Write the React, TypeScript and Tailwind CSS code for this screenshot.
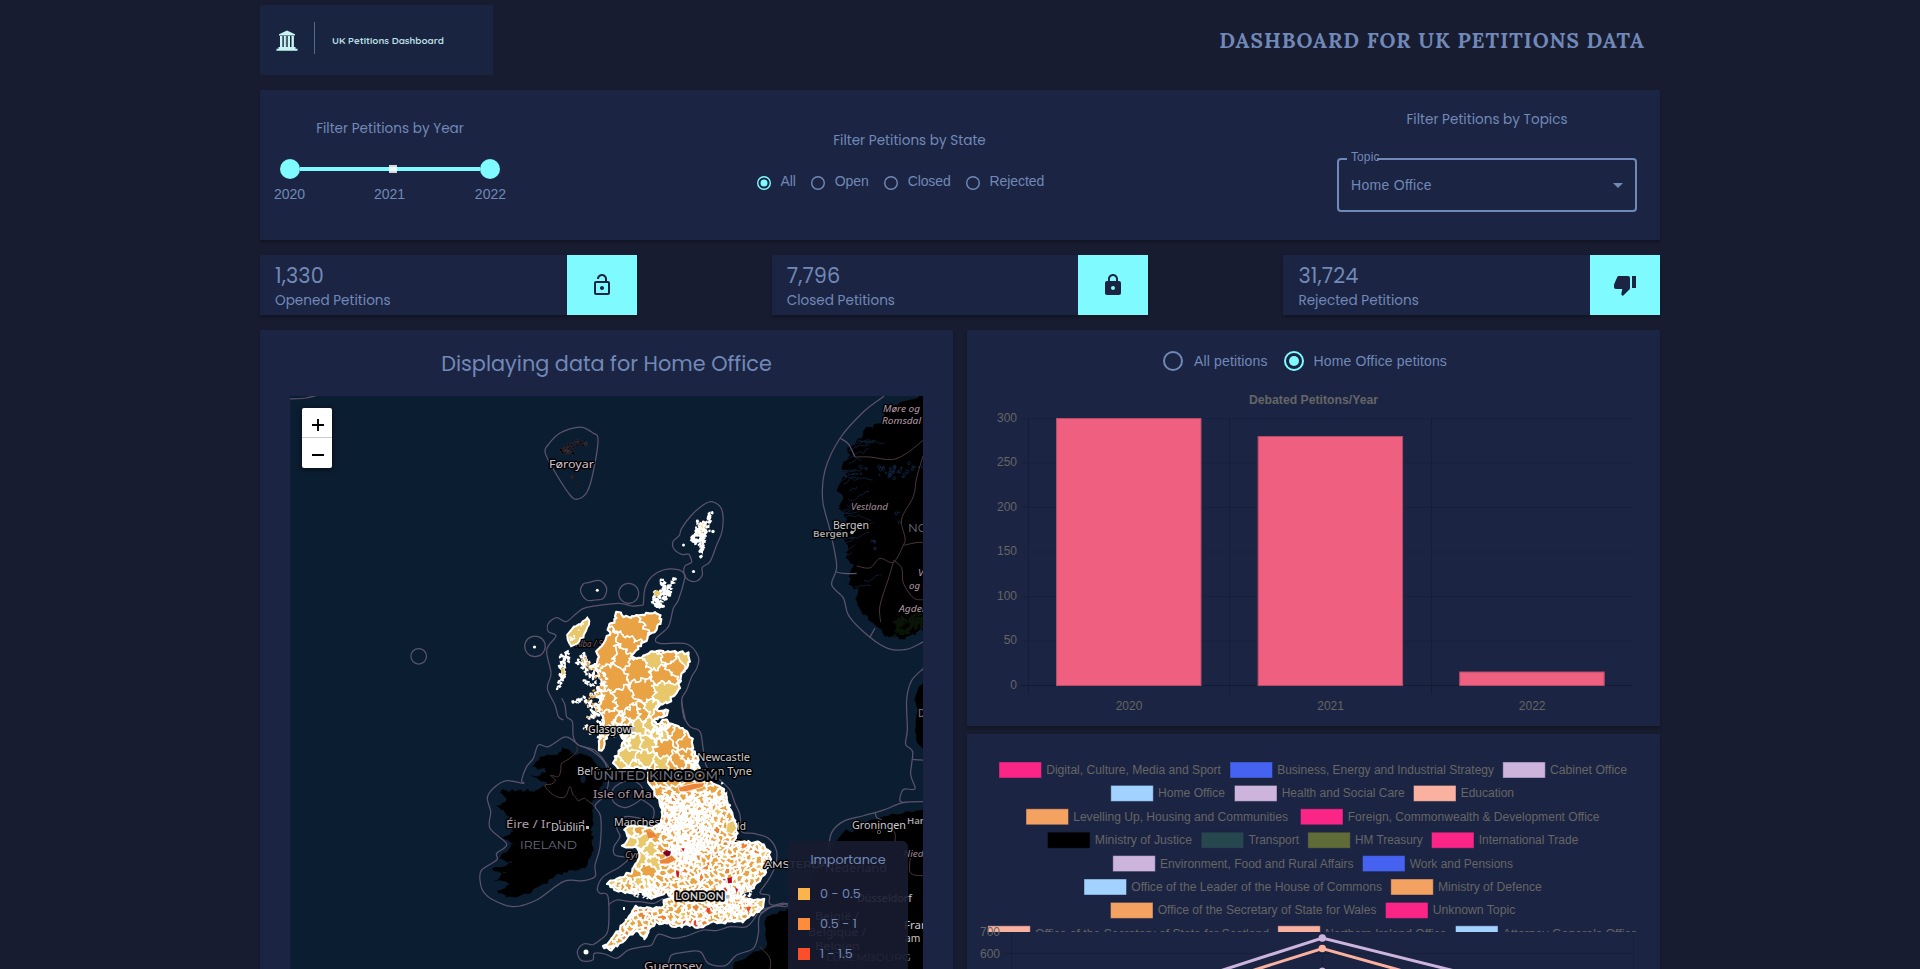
import React from "react";
import { MdOutlineLockOpen, MdLock, MdThumbDown } from "react-icons/md";

type Pt = [number, number];

const POPPINS = "font-['Poppins','Inter',sans-serif]";
const HELV = "font-['Liberation_Sans',Arial,sans-serif]";

/* ---------- geometry helpers ---------- */
function rng(seed: number) {
  let s = seed;
  return () => {
    s = (s * 1664525 + 1013904223) % 4294967296;
    return s / 4294967296;
  };
}
function parse(text: string, ox = 0, oy = 0, sx = 1, sy = 1): Pt[] {
  return text
    .trim()
    .split(/\s+/)
    .map((p) => {
      const [x, y] = p.split(",").map(Number);
      return [ox + x / sx, oy + y / sy] as Pt;
    });
}
const toPath = (pts: Pt[], close = true) =>
  "M" + pts.map((p) => p[0].toFixed(1) + " " + p[1].toFixed(1)).join("L") + (close ? "Z" : "");

function smooth(pts: Pt[], close = false) {
  const n = pts.length;
  const at = (i: number) => (close ? pts[(i + n) % n] : pts[Math.max(0, Math.min(n - 1, i))]);
  let d = `M${pts[0][0]} ${pts[0][1]}`;
  const m = close ? n : n - 1;
  for (let i = 0; i < m; i++) {
    const a = at(i - 1), b = at(i), c = at(i + 1), e = at(i + 2);
    d += `C${b[0] + (c[0] - a[0]) / 6} ${b[1] + (c[1] - a[1]) / 6} ${c[0] - (e[0] - b[0]) / 6} ${c[1] - (e[1] - b[1]) / 6} ${c[0]} ${c[1]}`;
  }
  return d;
}
function rough(pts: Pt[], seed: number, amp: number, step: number): Pt[] {
  const r = rng(seed);
  const out: Pt[] = [];
  pts.forEach((a, i) => {
    const b = pts[(i + 1) % pts.length];
    const len = Math.hypot(b[0] - a[0], b[1] - a[1]);
    const k = Math.max(1, Math.round(len / step));
    for (let j = 0; j < k; j++) {
      const t = j / k;
      out.push([
        a[0] + (b[0] - a[0]) * t + (r() - 0.5) * 2 * amp,
        a[1] + (b[1] - a[1]) * t + (r() - 0.5) * 2 * amp,
      ]);
    }
  });
  return out;
}
/* shared displacement field, so that borders of neighbouring cells stay joined */
function warp([x, y]: Pt): Pt {
  return [
    x + 1.5 * Math.sin(y * 0.71 + x * 0.23) + 1.1 * Math.sin(y * 1.63 - x * 0.9) + 0.5 * Math.sin(x * 2.3 + y * 1.1),
    y + 1.5 * Math.sin(x * 0.67 - y * 0.31) + 1.1 * Math.sin(x * 1.49 + y * 0.8) + 0.5 * Math.sin(y * 2.5 - x * 1.3),
  ];
}
function warpPoly(pts: Pt[]): Pt[] {
  const out: Pt[] = [];
  pts.forEach((a, i) => {
    const b = pts[(i + 1) % pts.length];
    const k = Math.max(1, Math.round(Math.hypot(b[0] - a[0], b[1] - a[1]) / 1.5));
    for (let j = 0; j < k; j++) out.push(warp([a[0] + ((b[0] - a[0]) * j) / k, a[1] + ((b[1] - a[1]) * j) / k]));
  });
  return out;
}
function inside(p: Pt, poly: Pt[]) {
  let c = false;
  for (let i = 0, j = poly.length - 1; i < poly.length; j = i++) {
    const [xi, yi] = poly[i], [xj, yj] = poly[j];
    if (yi > p[1] !== yj > p[1] && p[0] < ((xj - xi) * (p[1] - yi)) / (yj - yi) + xi) c = !c;
  }
  return c;
}
function clipHalf(poly: Pt[], a: Pt, b: Pt): Pt[] {
  const mx = (a[0] + b[0]) / 2, my = (a[1] + b[1]) / 2, dx = b[0] - a[0], dy = b[1] - a[1];
  const f = (p: Pt) => (p[0] - mx) * dx + (p[1] - my) * dy;
  const out: Pt[] = [];
  for (let i = 0; i < poly.length; i++) {
    const p = poly[i], q = poly[(i + 1) % poly.length];
    const fp = f(p), fq = f(q);
    if (fp <= 0) out.push(p);
    if (fp < 0 !== fq < 0) {
      const t = fp / (fp - fq);
      out.push([p[0] + (q[0] - p[0]) * t, p[1] + (q[1] - p[1]) * t]);
    }
  }
  return out;
}

/* ---------- Great Britain ---------- */
const GB = parse(`617,613 627,617 640,615 657,612 661,615 660,623 652,633 640,645 636,651 630,657 637,660 650,652 667,652 688,653
690,662 685,670 680,682 677,693 668,702 660,705 657,710 669,711 664,716 653,721 657,724 664,720 670,722 683,728 692,738 693,750 698,760 700,772 713,782 722,788 727,800
732,813 737,827 737,835 733,843 742,842 760,842 770,853 770,863 763,877 753,887 743,893 738,897 747,898 763,900 762,908 753,915
740,922 727,922 713,922 700,927 687,925 675,928 667,922 655,923 648,930 645,940 637,930 628,937 617,945 612,950 602,947 612,938
622,927 628,918 635,907 650,908 662,907 665,900 673,895 665,893 653,899 640,893 627,892 615,890 608,883 620,878 630,873 637,863
640,853 637,847 623,847 628,838 625,827 635,825 650,828 660,825 662,813 657,797 652,788 648,780 650,768 640,768 630,768 618,770
613,763 618,752 625,742 620,735 617,727 610,730 606,738 601,751 599,749 601,737 605,723 601,713 597,707 602,700 595,697 602,683 598,673
590,667 598,663 597,650 605,642 610,633 608,627 615,620`);
const CENTRES: [number, number, number][] = [
  [672, 818, 20], [692, 812, 16], [684, 850, 15], [733, 898, 17], [706, 838, 10], [652, 891, 8], [697, 764, 6], [620, 733, 9], [660, 728, 7], [715, 800, 7], [668, 893, 6],
];
const SCOT_SEEDS = parse(`637,630 650,622 608,652 622,655 630,648 612,678 640,668 655,660 668,656 685,657 676,666 664,676 645,692 664,690
648,710 625,702 606,705 608,718 632,714 645,712 625,724 648,742 628,756 664,746 676,734 688,742 680,764 690,757 668,730`);
function gap(x: number, y: number) {
  for (const [cx, cy, r] of CENTRES) if (Math.hypot(x - cx, y - cy) < r) return 3;
  if (y < 728) return 13;
  if (y < 768) return 17;
  if (x < 662 && y > 825 && y < 885) return 12;
  if (y > 800) return 5.6;
  return 11;
}
function buildCells() {
  const r = rng(77);
  const seeds: Pt[] = [...SCOT_SEEDS];
  for (let i = 0; i < 14000; i++) {
    const p: Pt = [598 + r() * 176, 715 + r() * 240];
    if (!inside(p, GB)) continue;
    const g = gap(p[0], p[1]) * (0.68 + r() * 0.7);
    if (seeds.every((q) => Math.hypot(p[0] - q[0], p[1] - q[1]) > g)) seeds.push(p);
  }
  return seeds.map((s, i) => {
    let poly: Pt[] = [[s[0] - 34, s[1] - 34], [s[0] + 34, s[1] - 34], [s[0] + 34, s[1] + 34], [s[0] - 34, s[1] + 34]];
    seeds.forEach((q, j) => {
      if (i !== j && Math.abs(q[0] - s[0]) < 68 && Math.abs(q[1] - s[1]) < 68) poly = clipHalf(poly, s, q);
    });
    const [x, y] = s;
    const v = r();
    let fill = "#eaa344";
    if ((y > 725 && y < 768 && x < 665) || (x < 660 && y > 838 && y < 886)) fill = v < 0.75 ? "#e8c86b" : "#eaa344";
    else if (y < 728) fill = (x === 655 && y === 660) || (x === 664 && y === 690) || x === 685 || (x === 648 && y === 710) ? "#e8c86b" : "#eaa344";
    else if (y > 795) {
      if (v < 0.08) fill = "#e8c86b";
      else if (v < 0.24) fill = "#ec8438";
      else if (v < 0.25) fill = "#e3422b";
    }
    return { d: toPath(warpPoly(poly)), fill, w: gap(x, y) < 4 ? 2.1 : y > 790 ? 1.8 : 1.5 };
  });
}
const CELLS = buildCells();
const GB_D = toPath(rough(GB, 9, 1.5, 2.6));

/* small islands, drawn as clusters of short blots */
function blots(poly: Pt[], n: number, seed: number, size: number) {
  const r = rng(seed);
  const xs = poly.map((p) => p[0]), ys = poly.map((p) => p[1]);
  const x0 = Math.min(...xs), x1 = Math.max(...xs), y0 = Math.min(...ys), y1 = Math.max(...ys);
  let d = "";
  let k = 0;
  for (let i = 0; i < 4000 && k < n; i++) {
    const p: Pt = [x0 + r() * (x1 - x0), y0 + r() * (y1 - y0)];
    if (!inside(p, poly)) continue;
    k++;
    const pts: Pt[] = [];
    for (let a = 0; a < 6; a++) {
      const q = size * (0.4 + r());
      pts.push([p[0] + Math.cos(a * 1.047) * q, p[1] + Math.sin(a * 1.047) * q]);
    }
    d += toPath(pts);
  }
  return d;
}
const z6 = (t: string) => parse(t, 540, 480, 3, 3);
const z7 = (t: string) => parse(t, 540, 700, 3, 3);
const z5 = (t: string) => parse(t, 280, 500, 3, 3);
const z8 = (t: string) => parse(t, 760, 380, 3, 2.662);

const LEWIS = z6("143,412 150,425 138,452 128,470 112,488 95,500 86,488 83,462 100,440 122,432");
const SHETLAND = z6("507,92 517,95 517,128 504,130 510,155 498,150 498,172 493,200 485,230 477,228 482,195 468,190 452,182 452,165 466,160 468,125 485,120 495,130 505,118");
const ORKNEY = z6("360,298 372,300 380,315 408,292 402,308 388,322 400,330 388,345 376,360 372,385 362,388 340,375 334,345 345,330 365,328");
const WEST_COAST = z6("150,560 185,545 200,600 195,650 185,700 165,715 140,718 150,690 130,670 150,650 165,620");
const PENNINES = z7("365,300 440,330 560,345 540,375 450,400 365,370");
const WHITE_BLOTS = [
  blots(z6("80,460 145,415 150,430 120,490 95,510 85,500"), 26, 3, 1.8),
  blots(z6("60,520 82,512 87,540 76,570 76,590 68,600 62,592 58,560"), 46, 4, 1.8),
  blots(z6("60,596 70,598 58,628 48,632"), 12, 44, 1.4),
  blots(z6("105,545 130,515 150,545 170,578 150,592 130,570"), 44, 5, 1.9),
  blots(WEST_COAST, 74, 6, 2.1),
  blots(z6("120,595 150,605 165,615 150,620"), 12, 7, 1.5),
  blots(z6("95,668 125,645 135,652 105,675"), 12, 8, 1.6),
  blots(SHETLAND, 110, 9, 1.9),
  blots(ORKNEY, 95, 10, 1.9),
  blots(z7("120,80 190,60 200,120 150,110"), 34, 11, 1.8),
  blots(z7("175,90 200,60 280,85 270,100 215,130"), 18, 12, 1.4),
  blots(PENNINES, 120, 13, 1.9),
  blots(z7("410,440 450,440 465,480 430,500"), 34, 14, 1.8),
  blots(z7("550,575 640,560 625,640 580,650"), 60, 15, 1.7),
  blots(z7("270,570 360,570 345,598 290,592"), 22, 16, 1.5),
  blots(z7("540,240 570,270 560,300 545,290"), 10, 17, 1.3),
];
const ORANGE_BLOTS = [
  blots(PENNINES, 26, 23, 1.2),
  blots(WEST_COAST, 30, 26, 1.3),
  blots(z6("125,545 135,525 150,560 150,580"), 12, 27, 1.2),
  blots(z7("550,575 640,560 625,640 580,650"), 16, 25, 1),
];

const IRELAND = rough(
  z5(`850,745 875,752 870,762 900,762 935,770 950,800 970,830 970,850 950,885 935,905 940,940 935,980 940,1040 930,1070 920,1105 870,1115 830,1125
800,1150 740,1180 690,1195 650,1175 690,1150 640,1140 680,1120 640,1110 700,1085 652,1080 700,1030 660,1010 700,995 700,960 655,920 680,900 660,870 700,872 760,870
800,850 755,830 800,812 755,800 780,770 830,765`), 21, 1.8, 3);
const NORWAY = rough(
  z8(`500,35 455,48 400,65 370,80 375,105 350,120 320,130 290,165 262,180 275,205 240,230 255,255 230,290 250,320 235,345 262,370 245,400 262,440 255,470 280,490 265,545
295,560 288,600 330,640 370,665 375,684 430,690 470,675 500,660`), 22, 2, 3);
const DENMARK = rough(z8("500,795 478,815 465,850 475,880 465,905 468,955 480,975 500,985"), 23, 0.9, 4);
const EUROPE = rough(
  z8(`280,1205 290,1185 330,1172 385,1158 440,1150 500,1140 500,1600 20,1600 15,1568 20,1500 15,1440 60,1415 85,1408 120,1380 180,1300 215,1260 230,1225 260,1195`), 24, 0.9, 5);
const FRANCE = rough(z7("760,630 700,645 680,650 676,700 682,745 640,755 620,772 582,788 575,830 760,830"), 25, 0.9, 5);

const SEA_LINES = [
  smooth(parse("545,452 548,445 560,433 580,427 593,433 598,440 593,473 587,492 578,499 570,495 552,467"), true),
  smooth(parse("290,399 306,398 318,395")),
  smooth(z6("447,222 425,223 402,207 399,185 418,166 425,145 455,105 490,75 515,65 545,88 547,150 530,195 510,245 487,262 487,285 470,303 445,300 432,280 435,258 455,246 447,222")),
  smooth(z6("310,375 315,325 335,290 370,270 410,268 432,280 433,300 415,360 400,385 385,440 348,475 360,490 440,492 475,530 470,565 455,590 440,630 425,660 435,715 430,710")),
  smooth(z6("310,375 275,378 235,370 140,382 110,400 78,425 50,413 25,430 25,455 48,468 20,510 33,580 22,625 45,675 55,710 70,720")),
  smooth(z6("145,308 180,302 200,325 190,355 165,360 140,360 122,335 130,312"), true),
  smooth(z7("65,-5 75,15 80,50 97,65 100,110 115,135 170,155 215,215")),
  smooth(z7("425,0 430,45 450,80 480,95 490,150 500,200 540,240 570,270 585,310 600,345 605,395 640,400 685,415 710,455 705,500 685,540 660,578 688,586 690,612 740,620")),
  smooth(z5("895,735 870,715 850,712 805,740 775,735 760,775 740,800 725,840 730,850 680,842 640,865 622,895 632,935 630,985 680,1032 650,1060 650,1080 605,1110 600,1140 610,1175 640,1200 700,1220 770,1200 850,1145 910,1142 945,1130 945,1095 960,1040 962,950 945,918 970,890 985,850 975,790 940,755 895,735")),
  smooth(z7("225,260 270,240 305,260 305,295 260,322 225,310 215,285"), true),
  smooth(z7("300,295 340,325 335,360 300,355 255,350 230,380 240,410 222,440 225,465 265,475 240,500 190,530 172,565 180,580 204,590 204,690 180,720 158,735")),
  smooth(z7("158,735 130,732 112,755 125,782 158,780 163,760 195,762 230,775 265,750 310,740 335,735 355,703 400,715 440,708 490,690 530,692 570,680 620,680 650,645 655,632 690,622 745,610")),
  smooth(z7("385,790 395,765 430,757 480,755 505,790 555,797 590,765 640,745 655,700 658,650 690,622")),
  smooth(z7("204,615 230,600 270,605 300,605 340,610 370,595")),
  smooth(z8("372,43 310,85 240,155 195,240 188,320 210,400 230,495 215,545 250,580 268,630 330,685 385,715 440,717 490,697")),
  smooth(z8("490,768 455,800 440,850 442,930 437,970 458,990 452,1050 465,1088 430,1090 420,1120 440,1125")),
  smooth(z8("500,1122 430,1125 370,1145 310,1160 250,1175 215,1205 205,1250")),
  smooth(z8("0,1420 40,1400 75,1393 90,1410")),
  smooth(z8("240,155 265,170 285,205")),
  smooth(z8("225,510 250,515 290,515")),
  smooth(z8("330,685 345,660")),
  smooth(z8("458,1010 490,1012")),
  smooth(z8("345,1150 350,1165 365,1170")),
];
const LAND_LINES = [
  smooth(z5("890,740 890,755 865,778 845,790 842,812 835,830 812,826 826,840 815,852 795,855 805,872 830,890 855,890 870,860 878,882 890,895 895,902 912,895 920,900 945,918")),
  smooth(z8("285,205 330,205 395,212 440,195 490,160")),
  smooth(z8("290,495 330,500 360,475 400,485 430,440 435,420 425,370 460,310 470,260 490,200")),
  smooth(z8("400,485 385,530 360,600 362,645")),
  smooth(z8("430,440 480,432 500,440")),
  smooth(z8("400,480 425,500 430,540 460,580 490,585")),
  smooth(z8("345,1190 400,1200 405,1230")),
  smooth(z8("455,1250 450,1310 490,1320")),
  smooth(z7("660,740 690,775 690,807")),
];
function lakes() {
  const r = rng(91);
  const out: React.ReactNode[] = [];
  const areas = [z8("355,240 415,210 440,240 420,265 360,280"), z8("335,430 355,425 350,460 335,460"), z8("440,230 490,240 490,290 450,270"), z8("405,360 420,360 420,390 405,390"), z8("290,230 330,220 320,240")];
  areas.forEach((a, k) => {
    const n = [26, 6, 7, 3, 3][k];
    const [c0, c1] = [a[0], a[2]];
    for (let i = 0; i < n; i++)
      out.push(<circle key={k + "-" + i} cx={c0[0] + r() * (c1[0] - c0[0])} cy={c0[1] + (r() - 0.3) * 12} r={0.6 + r() * 1.1} />);
  });
  return out;
}
function fjords() {
  const r = rng(55);
  let d = "";
  for (let i = 0; i < 34; i++) {
    let x = 838 + r() * 14, y = 440 + r() * 155;
    if (y < 450) x += 14;
    if (y > 575) x += 14;
    d += `M${x} ${y}`;
    const n = 3 + Math.floor(r() * 5);
    for (let j = 0; j < n; j++) d += `l${(1.5 + r() * 3.5).toFixed(1)} ${((r() - 0.6) * 6).toFixed(1)}`;
  }
  return d;
}

type LabelProps = { x: number; y: number; w: number; s: number; c?: string; i?: boolean; f?: string; b?: number; h?: number; children: string };
function L({ x, y, w, s, c = "#c9c9cf", i, f = "Noto Sans", b = 400, h = 2.6, children }: LabelProps) {
  return (
    <text x={x} y={y} textLength={w} lengthAdjust="spacingAndGlyphs" fontSize={s} fill={c} fontStyle={i ? "italic" : "normal"} fontWeight={b}
      fontFamily={`'${f}', 'Inter', sans-serif`} stroke="#000" strokeWidth={h} strokeLinejoin="round" paintOrder="stroke">
      {children}
    </text>
  );
}

function MapDrawing() {
  return (
    <svg className="block h-[573px] w-[633px]" viewBox="290 396 633 573">
      <defs>
        <clipPath id="gb"><path d={GB_D} /></clipPath>
      </defs>
      <rect x="290" y="396" width="633" height="573" fill="#0b1d31" />
      <g fill="#000">
        <path d={toPath(IRELAND)} />
        <path d={toPath(NORWAY)} />
        <path d={toPath(DENMARK)} />
        <path d={toPath(EUROPE)} />
        <path d={toPath(FRANCE)} />
      </g>
      <path d={blots(z8("400,640 440,625 490,610 490,660 430,680 400,680"), 90, 81, 2)} fill="#091406" />
      <ellipse cx="583" cy="779" rx="2.500" ry="4" fill="#0b1d31" />
      <path d={fjords()} fill="none" stroke="#0b1d31" strokeWidth="1" />
      <g fill="none" stroke="#13294a" strokeWidth="0.8">{lakes()}</g>
      <path d={blots(parse("560,451 564,442 570,440 574,446 576,459 570,456"), 22, 41, 1.8)} fill="#000" stroke="#4b3c44" strokeWidth="0.35" />
      <path d={blots(parse("574,441 584,437 588,443 577,449"), 14, 43, 1.5)} fill="#000" stroke="#4b3c44" strokeWidth="0.35" />
      <path d={blots(parse("571,474 575,475 578,486 573,482"), 7, 42, 1.4)} fill="#000" stroke="#4b3c44" strokeWidth="0.3" />
      <g fill="none" stroke="#5b536c" strokeWidth="1.25">
        {SEA_LINES.map((d, i) => <path key={i} d={d} />)}
        <circle cx="418.700" cy="656.300" r="7.800" />
        <circle cx="535" cy="646.300" r="10.300" />
        <circle cx="628.700" cy="593.300" r="10" />
      </g>
      <g fill="none" stroke="#4c363d" strokeWidth="1">
        {LAND_LINES.map((d, i) => <path key={i} d={d} />)}
      </g>

      <L x={576} y={647} w={30} s={9} c="#7d6570" i>Alba / Sc</L>
      <L x={577} y={775} w={36} s={10}>Belfast</L>
      <L x={593} y={798} w={67} s={10.500} c="#ab94a2">Isle of Man</L>
      <L x={614} y={826} w={60} s={10}>Manchester</L>
      <L x={697} y={761} w={53} s={10}>Newcastle</L>
      <L x={697} y={774.500} w={55} s={10}>upon Tyne</L>
      <L x={625} y={858} w={28} s={9} c="#a08c98" i>Cymru</L>
      <L x={732} y={845} w={8} s={8} c="#a08c98" i>a</L>
      <L x={704} y={830} w={42} s={10}>Sheffield</L>

      <g clipPath="url(#gb)">
        <path d={GB_D} fill="#eaa344" />
        {CELLS.map((c, i) => <path key={i} d={c.d} fill={c.fill} stroke="#fff" strokeWidth={c.w} strokeLinejoin="round" />)}
      </g>
      <path d={GB_D} fill="none" stroke="#fff" strokeWidth="2.200" strokeLinejoin="round" />
      <path d={toPath(rough(LEWIS, 61, 0.8, 3))} fill="#e8c86b" stroke="#fff" strokeWidth="2" />
      {WHITE_BLOTS.map((d, i) => <path key={i} d={d} fill={i === 0 ? "none" : "#fff"} />)}
      {ORANGE_BLOTS.map((d, i) => <path key={i} d={d} fill="#eaa344" />)}
      <path d={blots(z6("110,440 130,430 95,500 80,480"), 10, 71, 1.3)} fill="#fff" />
      <path d={blots(z6("460,170 480,130 500,130 490,180 480,200"), 8, 72, 0.9)} fill="#e8c86b" />
      <path d={toPath(z6("342,335 352,330 362,340 352,350 344,348"))} fill="#e8c86b" />
      <path d={toPath(z6("62,565 72,565 74,582 66,585"))} fill="#e8c86b" />
      <path d={toPath(z7("415,262 440,255 462,250 495,248 488,262 465,268 440,275 418,275"))} fill="#ec8438" stroke="#fff" strokeWidth="0.8" />
      <path d={toPath(z7("318,392 330,395 345,400 352,412 325,415"))} fill="#ec8438" />
      <path d={toPath(z7("357,480 375,475 395,465 410,480 385,492 360,492"))} fill="#ec8438" stroke="#fff" strokeWidth="0.8" />
      <path d={toPath(z7("562,370 580,362 590,385 575,402 558,395"))} fill="#e8c86b" stroke="#fff" strokeWidth="0.8" />
      <path d={toPath(z7("368,458 380,450 393,455 390,466 380,470"))} fill="#7d0025" />
      <path d={toPath(z7("562,535 575,532 576,548 564,550"))} fill="#b30026" />
      <path d={toPath(z7("408,512 418,515 416,532 410,530"))} fill="#d7102a" />
      <path d={toPath(z7("424,445 434,445 430,455"))} fill="#d7102a" />
      <path d={toPath(z7("585,562 594,568 590,580"))} fill="#d7102a" />
      <path d={toPath(z7("500,622 510,625 508,642 500,636"))} fill="#ee3a26" />
      <path d={toPath(z7("618,622 634,620 625,638"))} fill="#ee4a2a" />
      <g fill="#fff">
        <circle cx="597.300" cy="590.300" r="1.500" />
        <circle cx="534.500" cy="647" r="1.600" />
        <circle cx="683.500" cy="545" r="1.500" />
        <circle cx="693.500" cy="571.500" r="1.600" />
        <circle cx="713" cy="531.500" r="1.700" />
        <circle cx="586" cy="952" r="2.500" />
        <rect x="623" y="907" width="2" height="3" />
      </g>

      <L x={549} y={467.500} w={45} s={11.500} c="#cfbfcb">Føroyar</L>
      <L x={588} y={733} w={43} s={10} b={500}>Glasgow</L>
      <rect x="631" y="727" width="4" height="4" fill="#b9b9b9" />
      <L x={593} y={779.500} w={125} s={12} c="#666d7e" f="Montserrat" b={500} h={4}>UNITED KINGDOM</L>
      <L x={506} y={827.500} w={79} s={11} c="#b19ca9">Éire / Ireland</L>
      <L x={551} y={831} w={34} s={10}>Dublin</L>
      <rect x="586" y="826" width="3" height="3" fill="#b9b9b9" />
      <L x={520} y={849} w={57} s={11.500} c="#666c7c" f="Montserrat">IRELAND</L>
      <L x={675} y={900} w={49} s={10} b={600} c="#d0d0d0" f="Montserrat" h={3.4}>LONDON</L>
      <rect x="726" y="895" width="3.500" height="3.500" fill="#b9b9b9" />
      <L x={644} y={969.500} w={58} s={11.500} c="#c3b0be">Guernsey</L>

      <L x={883} y={411.500} w={37} s={9.500} i c="#b59caa">Møre og</L>
      <L x={882} y={423.500} w={39} s={9.500} i c="#b59caa">Romsdal</L>
      <L x={851} y={510} w={37} s={9.500} i c="#a58d9a">Vestland</L>
      <L x={833} y={528.500} w={36} s={10.500}>Bergen</L>
      <L x={813} y={536.500} w={35} s={9} b={600} c="#a5a5aa">Bergen</L>
      <circle cx="852" cy="532.500" r="1.800" fill="#b9b9b9" />
      <L x={908} y={532} w={46} s={11} c="#6a6f7c" f="Montserrat">NORGE</L>
      <L x={918} y={576} w={36} s={9.500} i c="#b59caa">Vestfold</L>
      <L x={909} y={589} w={11} s={9.500} i c="#b59caa">og</L>
      <L x={899} y={612} w={27} s={9.500} i c="#b59caa">Agder</L>
      <L x={918} y={717} w={45} s={10.500} c="#8b7a86">Danmark</L>
      <L x={852} y={828.500} w={54} s={10.500}>Groningen</L>
      <circle cx="879" cy="832" r="1.700" fill="none" stroke="#777" strokeWidth="0.8" />
      <L x={907} y={824} w={44} s={9.500} b={600} c="#a5a5aa">Hamburg</L>
      <L x={903} y={856.500} w={34} s={9.500} i c="#9d8794">Nieders</L>
      <L x={764} y={868} w={75} s={10} b={500} f="Montserrat">AMSTERDAM</L>
      <L x={825} y={872} w={62} s={11} c="#a58d9a">Nederland</L>
      <L x={857} y={902} w={55} s={10.500}>Düsseldorf</L>
      <L x={815} y={920} w={44} s={10.500} c="#a58d9a">België /</L>
      <L x={808} y={936} w={58} s={10.500} c="#a58d9a">Belgique /</L>
      <L x={815} y={950} w={45} s={10.500} c="#a58d9a">Belgien</L>
      <L x={826} y={961} w={85} s={10} c="#8a8a94" f="Montserrat">LUXEMBOURG</L>
      <L x={904} y={929} w={50} s={10}>Frankfurt</L>
      <L x={905} y={942} w={42} s={10}>am Main</L>
    </svg>
  );
}

/* ---------- controls ---------- */
function Radio({ on, size }: { on?: boolean; size: number }) {
  const c = on ? "#7ffbff" : "#7189b8";
  return (
    <svg width={size} height={size} viewBox="2 2 20 20" className="shrink-0">
      <circle cx="12" cy="12" r="9" fill="none" stroke={c} strokeWidth="2" />
      {on && <circle cx="12" cy="12" r="5" fill={c} />}
    </svg>
  );
}

function Capitol() {
  return (
    <svg width="22" height="21" viewBox="0 0 22 21" className="ml-[16px] shrink-0" fill="#c8f5f2">
      <path d="M11 0.500L19 4.300V5.500H3V4.300z" />
      <path d="M4 6h2.400V17H4zM7.800 6h2.100V17H7.800zM11.900 6h2.100V17h-2.100zM15.500 6h2.400V17h-2.400z" />
      <path d="M10.400 6h1V17h-1z" fillOpacity="0.500" />
      <path d="M2.500 17h17v1.800H21.500v2H0.500v-2h2z" />
    </svg>
  );
}

function Stat({ value, label, icon }: { value: string; label: string; icon: React.ReactNode }) {
  return (
    <div className="flex h-[60px] w-[376.6px] bg-[#1b2442] shadow-[0_2px_3px_rgba(0,0,0,0.3)]">
      <div className={`flex flex-1 flex-col pl-[15px] pt-[7px] text-[#7189b8] ${POPPINS}`}>
        <span className="text-[20.8px] leading-[28px] tracking-[0.1px]">{value}</span>
        <span className="text-[13.6px] leading-[22px]">{label}</span>
      </div>
      <div className="flex w-[70px] items-center justify-center bg-[#7ffbff] text-[24px] text-[#1b2442]">{icon}</div>
    </div>
  );
}

/* ---------- charts ---------- */
const TICKS = [300, 250, 200, 150, 100, 50, 0];
const BARS: [number, number, string][] = [[1056, 418, "2020"], [1257.600, 436, "2021"], [1459.200, 671.500, "2022"]];

function BarChart() {
  return (
    <svg className="block h-[334px] w-[693px]" viewBox="967 392 693 334" fontFamily="'Liberation Sans', Arial, sans-serif" fontSize="12" fill="#666">
      <text x="1313.500" y="403.500" textAnchor="middle" fontWeight="bold" textLength="129" lengthAdjust="spacingAndGlyphs">Debated Petitons/Year</text>
      {TICKS.map((t, i) => {
        const y = 418.5 + i * 44.5;
        return (
          <g key={t}>
            <line x1="1021" x2="1633" y1={y} y2={y} stroke="#000" strokeOpacity={t ? 0.1 : 0.25} />
            <text x="1017" y={y + 3.3} textAnchor="end">{t}</text>
          </g>
        );
      })}
      {[1028.500, 1229.500, 1431.500].map((x) => <line key={x} x1={x} x2={x} y1="418" y2="694" stroke="#000" strokeOpacity="0.18" />)}
      {BARS.map(([x, y, n]) => (
        <g key={n}>
          <rect x={x + 0.5} y={y + 0.5} width="144.500" height={685 - y} fill="#ee5f80" stroke="#b14c6b" />
          <text x={x + 73} y="709.500" textAnchor="middle">{n}</text>
        </g>
      ))}
    </svg>
  );
}

const PINK = "#fb2588", BLUE = "#4662f0", LILAC = "#cdb4dc", SKY = "#a2d2ff", SALMON = "#fbb1a0", ORANGE = "#f4a262";
type Item = [number, number, string, string];
const LEGEND: Item[][] = [
  [[998.500, 1221, PINK, "Digital, Culture, Media and Sport"], [1229.500, 1494, BLUE, "Business, Energy and Industrial Strategy"], [1502.300, 1627, LILAC, "Cabinet Office"]],
  [[1110.300, 1225, SKY, "Home Office"], [1234, 1404.700, LILAC, "Health and Social Care"], [1413, 1514, SALMON, "Education"]],
  [[1025.500, 1288, ORANGE, "Levelling Up, Housing and Communities"], [1300, 1599.600, PINK, "Foreign, Commonwealth & Development Office"]],
  [[1047, 1192, "#000000", "Ministry of Justice"], [1200.700, 1299, "#27474f", "Transport"], [1307.300, 1422.700, "#606c38", "HM Treasury"], [1431, 1578.300, PINK, "International Trade"]],
  [[1112.300, 1353.500, LILAC, "Environment, Food and Rural Affairs"], [1362, 1513, BLUE, "Work and Pensions"]],
  [[1083.500, 1382, SKY, "Office of the Leader of the House of Commons"], [1390.300, 1541.700, ORANGE, "Ministry of Defence"]],
  [[1110, 1376.500, ORANGE, "Office of the Secretary of State for Wales"], [1385, 1515.300, PINK, "Unknown Topic"]],
  [[987.300, 1269, SALMON, "Office of the Secretary of State for Scotland"], [1277.300, 1446.500, SALMON, "Northern Ireland Office"], [1455, 1637.500, SKY, "Attorney Generals Office"]],
];

function LineChart() {
  return (
    <svg className="block h-[235px] w-[693px]" viewBox="967 734 693 235" fontFamily="'Liberation Sans', Arial, sans-serif" fontSize="12" fill="#666">
      <defs>
        <clipPath id="legendArea"><rect x="967" y="734" width="693" height="198" /></clipPath>
      </defs>
      <g clipPath="url(#legendArea)">
        {LEGEND.map((row, r) => {
          const cy = 770 + r * 23.4;
          return row.map(([x, end, fill, label]) => (
            <g key={label}>
              <rect x={x + 0.5} y={cy - 8} width="42.500" height="16" fill={fill} />
              <rect x={x + 0.5} y={cy - 8} width="42.500" height="16" fill="none" stroke="#1b2442" strokeOpacity="0.45" />
              <text x={x + 47.7} y={cy + 4} textLength={end - x - 47.7} lengthAdjust="spacingAndGlyphs">{label}</text>
            </g>
          ));
        })}
      </g>
      <g stroke="#000" strokeOpacity="0.15">
        <line x1="1011.500" x2="1011.500" y1="932" y2="969" />
        <line x1="1322.500" x2="1322.500" y1="932" y2="969" />
        <line x1="1633.500" x2="1633.500" y1="932" y2="969" />
        <line x1="1004" x2="1633" y1="953.500" y2="953.500" />
      </g>
      <text x="1000" y="936" textAnchor="end">700</text>
      <text x="1000" y="957.500" textAnchor="end">600</text>
      <g fill="none" strokeWidth="3">
        <path d="M1198 978L1322.300 938L1483 978" stroke={LILAC} />
        <path d="M1229 978L1322.300 948.500L1428 978" stroke={SALMON} />
      </g>
      <circle cx="1322.300" cy="938" r="3.700" fill={LILAC} />
      <circle cx="1322.300" cy="948.500" r="3.700" fill={SALMON} />
      <circle cx="1322.300" cy="971" r="3.500" fill={LILAC} />
    </svg>
  );
}

const SCALE: [string, string][] = [["bg-[#fbb34c]", "0 - 0.5"], ["bg-[#fd8d3c]", "0.5 - 1"], ["bg-[#fc4e2a]", "1 - 1.5"]];
const CARD = "bg-[#1b2442] shadow-[0_2px_3px_rgba(0,0,0,0.3)]";

export default function App() {
  return (
    <div className={`h-[969px] w-full overflow-hidden bg-[#171c30] text-[#7189b8] ${HELV}`}>
      <div className="mx-auto w-[1400px]">
        <header className="flex items-start justify-between pt-[5px]">
          <div className="flex h-[70px] w-[233px] items-center bg-[#192441]">
            <Capitol />
            <span className="mb-[4px] ml-[16px] h-[32px] w-px bg-[#56698a]" />
            <span className="ml-[17px] font-['Quicksand','Poppins','Inter',sans-serif] text-[9.8px] font-bold whitespace-nowrap text-[#b9dfe2]">UK Petitions Dashboard</span>
          </div>
          <h1 className="mr-[15px] mt-[22px] font-['Lora','Liberation_Serif',serif] text-[20.8px] leading-[28px] font-bold tracking-[1.04px]">DASHBOARD FOR UK PETITIONS DATA</h1>
        </header>

        <section className={`mt-[15px] flex h-[150px] justify-between ${CARD}`}>
          <div className="w-[260px] pt-[29px]">
            <div className={`text-center text-[13.6px] leading-[20px] ${POPPINS}`}>Filter Petitions by Year</div>
            <div className="mt-[20px] flex items-center pl-[20px]">
              <span className="size-[20px] rounded-full bg-[#7ffbff]" />
              <span className="h-[4px] w-[89px] bg-[#7ffbff]" />
              <span className="flex size-[8px] items-center bg-[#d6d9e0]"><span className="h-[4px] w-[8px] bg-[#e8fdff]" /></span>
              <span className="h-[4px] w-[83px] bg-[#7ffbff]" />
              <span className="size-[20px] rounded-full bg-[#7ffbff]" />
            </div>
            <div className="mt-[5px] flex w-[246px] justify-between pl-[14px] text-[14px] leading-[20px]">
              <span>2020</span><span className="mr-[1px]">2021</span><span>2022</span>
            </div>
          </div>
          <div className="ml-[-38px] w-[300px] pt-[41px]">
            <div className={`text-center text-[13.6px] leading-[20px] ${POPPINS}`}>Filter Petitions by State</div>
            <div className="mt-[20px] ml-[-8px] flex h-[20px] items-center gap-[15px] pl-[5px] text-[14px] tracking-[-0.1px]">
              {["All", "Open", "Closed", "Rejected"].map((s, i) => (
                <span key={s} className="flex items-center gap-[10px]">
                  <span className="pt-[3px]"><Radio on={i === 0} size={14} /></span>
                  <span>{s}</span>
                </span>
              ))}
            </div>
          </div>
          <div className="w-[323px] pt-[20px] pr-[23px]">
            <div className={`text-center text-[13.6px] leading-[20px] ${POPPINS}`}>Filter Petitions by Topics</div>
            <div className="relative mt-[28px] flex h-[54px] items-center justify-between rounded-[4px] border-2 border-[#7189b8] pr-[12px] pl-[12px]">
              <span className="absolute top-[-2px] left-[8px] h-[2px] w-[30px] bg-[#1b2442]" />
              <span className="absolute top-[-11px] left-[12px] text-[12px] leading-[16px] tracking-[0.1px]">Topic</span>
              <span className="text-[14px] tracking-[0.3px]">Home Office</span>
              <svg width="10" height="5" viewBox="0 0 10 5"><path d="M0 0h10L5 5z" fill="#7189b8" /></svg>
            </div>
          </div>
        </section>

        <section className="mt-[15px] flex justify-between">
          <Stat value="1,330" label="Opened Petitions" icon={<MdOutlineLockOpen />} />
          <Stat value="7,796" label="Closed Petitions" icon={<MdLock />} />
          <Stat value="31,724" label="Rejected Petitions" icon={<MdThumbDown />} />
        </section>

        <main className="mt-[15px] flex justify-between">
          <section className={`h-[639px] w-[693px] px-[30px] ${CARD}`}>
            <h2 className={`h-[66px] pt-[19px] text-center text-[20.8px] leading-[30px] ${POPPINS}`}>Displaying data for Home Office</h2>
            <div className="relative">
              <MapDrawing />
              <div className="absolute top-[12px] left-[12px] flex w-[30px] flex-col overflow-hidden rounded-[2px] bg-white shadow-[0_1px_5px_rgba(0,0,0,0.65)]">
                <span className="flex h-[30px] items-center justify-center border-b border-[#ccc] pt-[4px] pl-px">
                  <svg width="12" height="12" viewBox="0 0 12 12"><path d="M0 6h12M6 0v12" stroke="#000" strokeWidth="1.900" /></svg>
                </span>
                <span className="flex h-[30px] items-center justify-center pt-[4px] pl-px">
                  <svg width="12" height="12" viewBox="0 0 12 12"><path d="M0 6h12" stroke="#000" strokeWidth="2" /></svg>
                </span>
              </div>
              <div className={`absolute top-[445px] left-[498px] h-[128px] w-[120px] rounded-t-[6px] bg-[#171c30]/90 ${POPPINS}`}>
                <div className="pt-[9px] text-center text-[12.8px] leading-[20px]">Importance</div>
                <div className="flex flex-col gap-[10px] pt-[14px] pl-[10px]">
                  {SCALE.map(([bg, label]) => (
                    <div key={label} className="flex h-[20px] items-center gap-[10px] text-[12.8px]">
                      <span className={`size-[12px] ${bg}`} />
                      <span>{label}</span>
                    </div>
                  ))}
                </div>
              </div>
            </div>
          </section>

          <div className="flex w-[693px] flex-col gap-[8px]">
            <section className={`h-[396px] ${CARD}`}>
              <div className="flex h-[62px] items-center gap-[16px] pl-[196px] text-[14px] tracking-[0.15px]">
                <span className="flex items-center gap-[11px]"><Radio size={20} />All petitions</span>
                <span className="flex items-center gap-[10px]"><Radio on size={20} />Home Office petitons</span>
              </div>
              <BarChart />
            </section>
            <section className={`h-[235px] ${CARD}`}>
              <LineChart />
            </section>
          </div>
        </main>
      </div>
    </div>
  );
}
